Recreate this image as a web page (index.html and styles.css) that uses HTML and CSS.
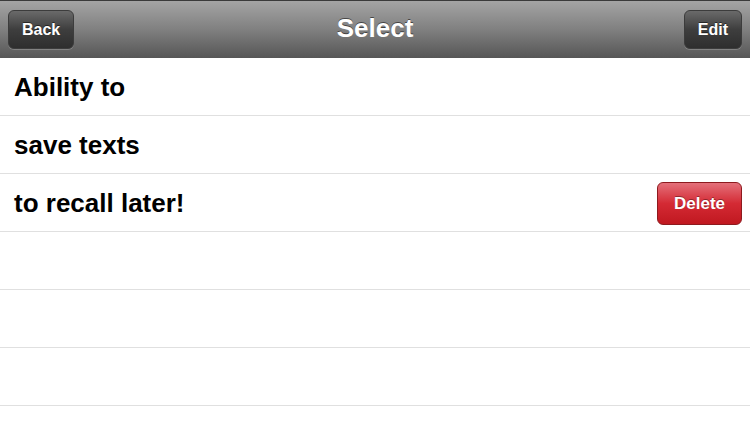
FILE: index.html
```html
<!DOCTYPE html>
<html lang="en">
<head>
    <meta charset="UTF-8">
    <meta name="viewport" content="width=device-width, initial-scale=1.0">
    <title>Select</title>
    <link rel="stylesheet" href="styles.css">
</head>
<body>
    <header class="navbar">
        <button class="bar-btn back">Back</button>
        <h1>Select</h1>
        <button class="bar-btn edit">Edit</button>
    </header>
    <ul class="list">
        <li>Ability to</li>
        <li>save texts</li>
        <li>to recall later! <button class="delete-btn">Delete</button></li>
        <li></li>
        <li></li>
        <li></li>
    </ul>
</body>
</html>
```

FILE: styles.css
```css
/* General Styles */
body {
    font-family: "Liberation Sans", Arial, sans-serif;
    background-color: #fff;
    margin: 0;
}

/* Navigation Bar */
.navbar {
    height: 57px;
    border-top: 1px solid #3a3a3a;
    display: grid;
    grid-template-columns: 1fr auto 1fr;
    align-items: center;
    padding: 0 8px;
    background: linear-gradient(#a4a4a4, #808080 50%, #565656);
}

.navbar h1 {
    margin: 0;
    font-size: 26px;
    color: #fff;
    text-shadow: 0 -1px 0 rgba(0, 0, 0, 0.5);
    padding-bottom: 3px;
}

.bar-btn {
    height: 39px;
    padding: 1px 13px 0;
    border: 1px solid #3c3c3c;
    border-radius: 6px;
    background: linear-gradient(#6a6a6a, #3e3e3e 50%, #2e2e2e);
    color: #fff;
    font-family: inherit;
    font-weight: bold;
    font-size: 16px;
    text-shadow: 0 -1px 0 rgba(0, 0, 0, 0.5);
    box-shadow: 0 1px 0 rgba(255, 255, 255, 0.2);
}

.back {
    justify-self: start;
}

.edit {
    justify-self: end;
}

/* List */
.list {
    list-style: none;
    margin: 0;
    padding: 0;
}

.list li {
    height: 57px;
    border-bottom: 1px solid #e0e0e0;
    display: flex;
    align-items: center;
    justify-content: space-between;
    padding: 2px 8px 0 14px;
    box-sizing: border-box;
    height: 58px;
    font-size: 26px;
    font-weight: bold;
    color: #000;
}

.delete-btn {
    height: 43px;
    width: 85px;
    padding-top: 2px;
    border: 1px solid #8e1a1e;
    border-radius: 6px;
    background: linear-gradient(#e4707a, #d42a34 50%, #c01820);
    color: #fff;
    font-family: inherit;
    font-weight: bold;
    font-size: 17px;
    text-shadow: 0 -1px 0 rgba(0, 0, 0, 0.35);
}
```
